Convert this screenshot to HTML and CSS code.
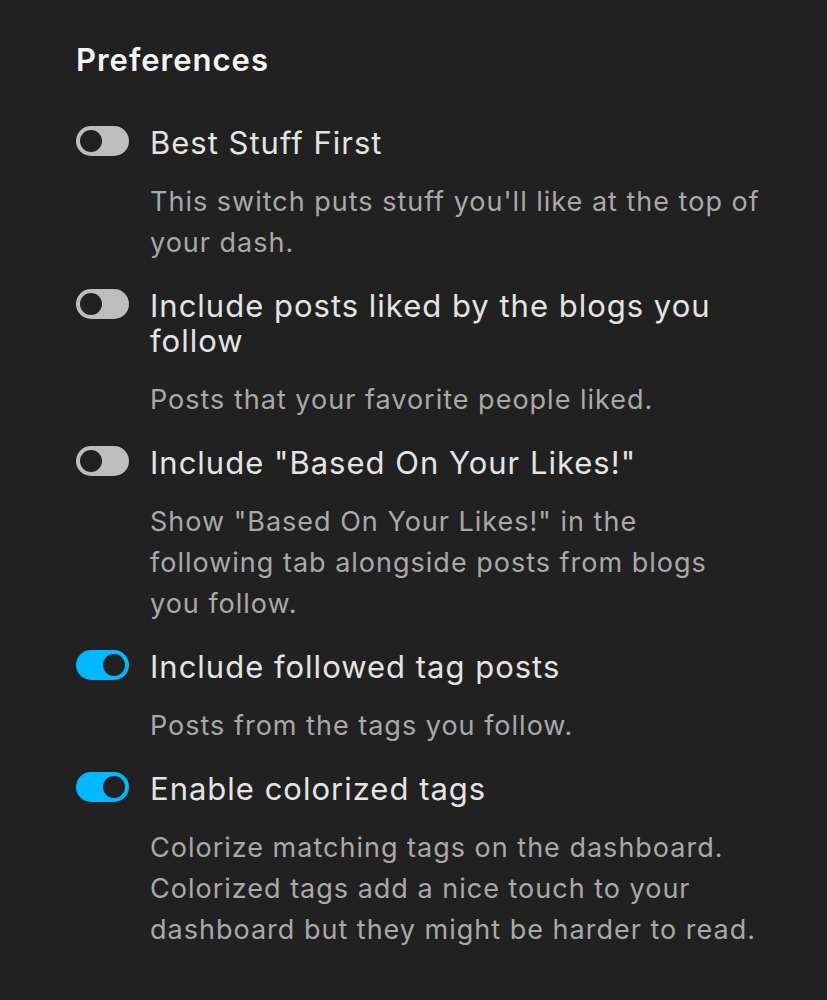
FILE: index.html
```html
<!DOCTYPE html>
<html lang="en">

<head>
    <meta charset="UTF-8">
    <title>Preferences</title>
    <link rel="stylesheet" href="styles.css">
</head>

<body>
    <div class="prefs">
        <h2 class="prefs-title">Preferences</h2>
        <ul class="pref-list">
            <li class="pref">
                <span class="toggle"></span>
                <div class="pref-text">
                    <div class="pref-label">Best Stuff First</div>
                    <div class="pref-desc">This switch puts stuff you'll like at the top of<br>your dash.</div>
                </div>
            </li>
            <li class="pref">
                <span class="toggle"></span>
                <div class="pref-text">
                    <div class="pref-label">Include posts liked by the blogs you<br>follow</div>
                    <div class="pref-desc">Posts that your favorite people liked.</div>
                </div>
            </li>
            <li class="pref">
                <span class="toggle"></span>
                <div class="pref-text">
                    <div class="pref-label">Include "Based On Your Likes!"</div>
                    <div class="pref-desc">Show "Based On Your Likes!" in the<br>following tab alongside posts from blogs<br>you follow.</div>
                </div>
            </li>
            <li class="pref">
                <span class="toggle on"></span>
                <div class="pref-text">
                    <div class="pref-label">Include followed tag posts</div>
                    <div class="pref-desc">Posts from the tags you follow.</div>
                </div>
            </li>
            <li class="pref">
                <span class="toggle on"></span>
                <div class="pref-text">
                    <div class="pref-label">Enable colorized tags</div>
                    <div class="pref-desc">Colorize matching tags on the dashboard.<br>Colorized tags add a nice touch to your<br>dashboard but they might be harder to read.</div>
                </div>
            </li>
        </ul>
    </div>
</body>

</html>
```

FILE: styles.css
```css
html,
body {
    margin: 0;
    padding: 0;
    background-color: #212121;
}

body {
    font-family: Inter, "Noto Sans", sans-serif;
}

.prefs {
    padding: 42px 20px 0 76px;
}

.prefs-title {
    margin: 0 0 47px 0;
    font-size: 31px;
    line-height: 36px;
    font-weight: 600;
    letter-spacing: 1px;
    color: #f4f4f4;
}

.pref-list {
    margin: 0;
    padding: 0;
    list-style: none;
}

.pref {
    display: flex;
    align-items: flex-start;
    gap: 21px;
    margin-bottom: 25px;
}

.toggle {
    position: relative;
    flex: none;
    width: 53px;
    height: 30px;
    margin-top: 1px;
    border-radius: 15px;
    background-color: #bdbdbd;
}

.toggle::after {
    content: "";
    position: absolute;
    top: 4px;
    left: 4px;
    width: 22px;
    height: 22px;
    border-radius: 50%;
    background-color: #212121;
}

.toggle.on {
    background-color: #00b8ff;
}

.toggle.on::after {
    left: 27px;
}

.pref-label {
    font-size: 31px;
    line-height: 35px;
    letter-spacing: 1px;
    color: #e4e4e4;
}

.pref-desc {
    margin-top: 21px;
    font-size: 27px;
    line-height: 41px;
    letter-spacing: 1px;
    color: #a9a9a9;
}
```
